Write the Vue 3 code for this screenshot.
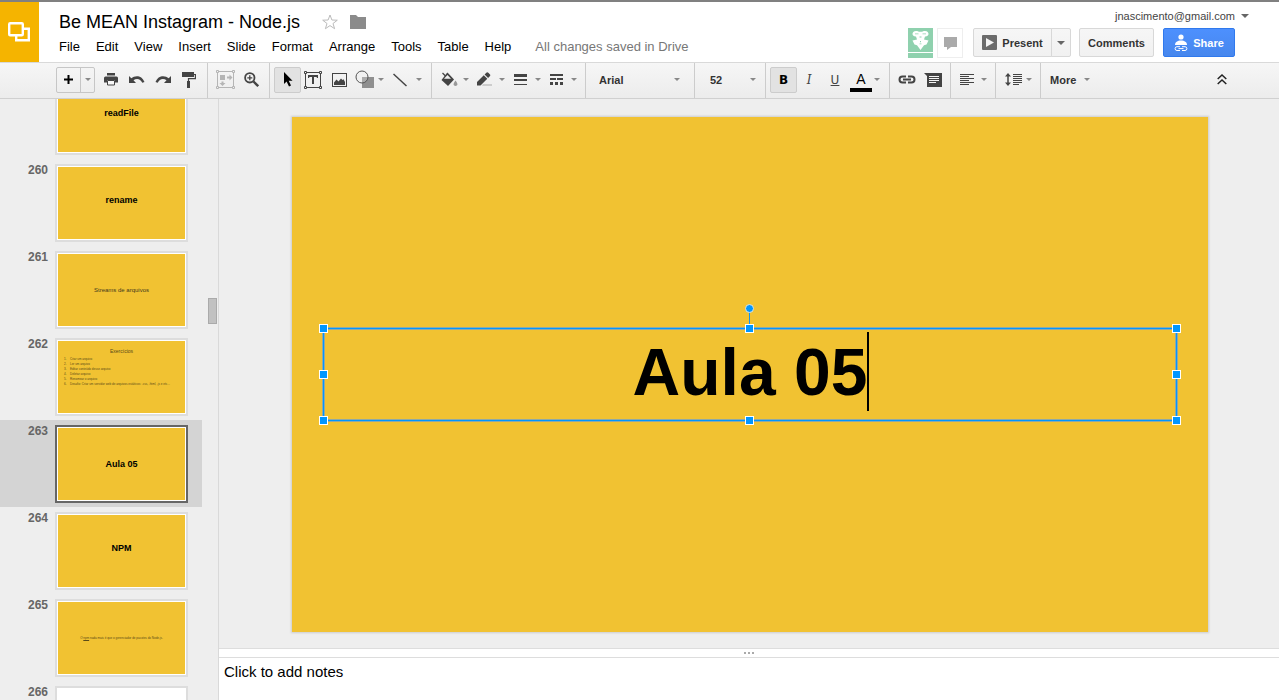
<script setup>
import { ref } from 'vue'

const menus = ['File', 'Edit', 'View', 'Insert', 'Slide', 'Format', 'Arrange', 'Tools', 'Table', 'Help']

const slides = [
  { n: 259, kind: 'title', text: 'readFile', raised: true, scrolledOff: true },
  { n: 260, kind: 'title', text: 'rename', raised: true },
  { n: 261, kind: 'plain', text: 'Streams de arquivos' },
  {
    n: 262,
    kind: 'list',
    text: 'Exercícios',
    items: [
      'Criar um arquivo',
      'Ler um arquivo',
      'Editar conteúdo desse arquivo',
      'Deletar arquivo',
      'Renomear o arquivo',
      'Desafio: Criar um servidor web de arquivos estáticos: .css, .html, .js e etc...'
    ]
  },
  { n: 263, kind: 'title', text: 'Aula 05' },
  { n: 264, kind: 'title', text: 'NPM', raised: true },
  { n: 265, kind: 'tiny', text: 'nada mais é que o gerenciador de pacotes do Node.js.' },
  { n: 266, kind: 'blank', text: '' }
]
const current = ref(263)
const font = ref('Arial')
const size = ref('52')
const notes = ref('')
const handles = ['nw', 'n', 'ne', 'w', 'e', 'sw', 's', 'se']
</script>

<template>
  <div class="app">
    <header class="header">
      <a class="logo" href="#" aria-label="Slides home">
        <svg width="24" height="22" viewBox="0 0 24 22" fill="none" stroke="#fff" stroke-width="2.4">
          <rect x="2.2" y="2.2" width="13.6" height="12" rx="1" />
          <path d="M17 7.800h4.800v11.400H9.200v-4.500" />
        </svg>
      </a>
      <div class="doc">
        <div class="title-row">
          <h1>Be MEAN Instagram - Node.js</h1>
          <button class="bare star" aria-label="Star">
            <svg width="16" height="16" viewBox="0 0 16 16" fill="none" stroke="#bbb">
              <path d="M8 1l1.900 5 5.400.2-4.300 3.300 1.600 5.200L8 11.600l-4.600 3.100L5 9.500.7 6.200 6.100 6z" />
            </svg>
          </button>
          <button class="bare" aria-label="Move to folder">
            <svg width="16" height="14" viewBox="0 0 16 14" fill="#8b8b8b"><path d="M0 0h6l2 2h8v12H0z" /></svg>
          </button>
        </div>
        <nav class="menus">
          <button v-for="m in menus" :key="m" class="bare">{{ m }}</button>
          <span class="saved">All changes saved in Drive</span>
        </nav>
      </div>
      <div class="account">
        <button class="bare email">jnascimento@gmail.com<i class="arrow big"></i></button>
        <div class="actions">
          <div class="avatar">
            <svg width="25" height="30" viewBox="0 0 25 30">
              <rect width="25" height="30" fill="#8fd1ae" />
              <path fill="#fff" d="M8 3c2 0 2.500.8 4.500.8S15 3 17 3c2.500 0 3.500 1.500 3.500 3S19 8.500 17.500 8.500h-10C6 8.500 4.500 7.500 4.500 6S5.500 3 8 3zM8 8.500h9l-1 3 4.500 1-2 4-2.500.8-3.500 4.700L9 17.300l-2.500-.8-2-4 4.500-1z" />
              <path fill="#8fd1ae" d="M7 5.500h3.500v.8H7zM14.500 5.500H18v.8h-3.500zM11.500 8.500h2v1h-2zM12 13h1v1.200h-1zM11.500 15.500h2v.8h-2z" />
              <path fill="#fff" d="M0 24h25v1H0z" />
            </svg>
          </div>
          <button class="chat" aria-label="Chat">
            <svg width="13" height="13" viewBox="0 0 13 13" fill="#aaa"><path d="M0 0h13v10H7l-4 3v-3H0z" /></svg>
          </button>
          <div class="split present">
            <button class="push main">
              <svg width="15" height="15" viewBox="0 0 15 15"><rect width="15" height="15" rx="1" fill="#6b6b6b" /><path fill="#f4f4f4" d="M4 3l8 4.500L4 12z" /></svg>
              Present
            </button>
            <button class="push drop" aria-label="Present options"><i class="arrow big"></i></button>
          </div>
          <button class="push comments">Comments</button>
          <button class="push share">
            <svg width="14" height="18" viewBox="0 0 14 18" fill="#fff">
              <circle cx="7" cy="3" r="2.600" />
              <path d="M1 11c0-3 2.500-4.500 6-4.500s6 1.500 6 4.500z" />
              <g fill="none" stroke="#fff"><path d="M6 12.700H3a1.800 1.800 0 000 3.800h3M8 12.700h3a1.800 1.800 0 010 3.800H8M4.500 14.600h5" /></g>
            </svg>
            Share
          </button>
        </div>
      </div>
    </header>

    <div class="toolbar" role="toolbar" aria-label="Editing tools">
      <div class="group first">
        <div class="split new">
          <button class="tool" aria-label="New slide">
            <svg width="9" height="9" viewBox="0 0 9 9"><path fill="#000" d="M3.500 0h2v3.500H9v2H5.500V9h-2V5.500H0v-2h3.500z" /></svg>
          </button>
          <button class="tool" aria-label="New slide layout"><i class="arrow"></i></button>
        </div>
        <button class="tool" aria-label="Print">
          <svg width="14" height="13" viewBox="0 0 14 13" fill="#444"><path d="M3 0h8v2.500H3zM1.500 3.500h11Q14 3.500 14 5v4.500h-3V7H3v2.500H0V5q0-1.500 1.500-1.500z" /><path d="M3.500 7.500h7v4.500h-7z" fill="#f8f8f8" stroke="#444" /></svg>
        </button>
        <button class="tool" aria-label="Undo">
          <svg width="16" height="10" viewBox="0 0 16 10" fill="#444"><path d="M0 1l2.300 2.200C6 0 13 0 15.500 7l-2.200.8C11.500 3.500 7.500 3 4.500 5.200L7 8H0z" /></svg>
        </button>
        <button class="tool" aria-label="Redo">
          <svg width="16" height="10" viewBox="0 0 16 10" fill="#444"><path d="M16 1l-2.300 2.200C10 0 3 0 .5 7l2.200.8C4.500 3.500 8.500 3 11.500 5.200L9 8h7z" /></svg>
        </button>
        <button class="tool" aria-label="Paint format">
          <svg width="14" height="16" viewBox="0 0 14 16"><path fill="#444" d="M0 0h12v5H0zM5 9h3v7H5z" /><path d="M12 2.500h1.400v4.200H6.500V10" fill="none" stroke="#444" stroke-width="1.200" /></svg>
        </button>
      </div>

      <div class="group zoom">
        <button class="tool" disabled aria-label="Zoom to fit">
          <svg width="19" height="19" viewBox="0 0 19 19" fill="none" stroke="#b5b5b5">
            <path d="M3 1.500h13M3 17.500h13M1.500 3v13M17.500 3v13" />
            <path d="M.5.5h2v2h-2zM16.500.5h2v2h-2zM.5 16.500h2v2h-2zM16.500 16.500h2v2h-2z" />
            <path fill="#b5b5b5" stroke="none" d="M4 5h5v5H4zM11 6.500h2.500v-2l3 3-3 3v-2H11zM5.500 11.500h2v1.500h2l-3 3-3-3h2z" />
          </svg>
        </button>
        <button class="tool" aria-label="Zoom">
          <svg width="15" height="15" viewBox="0 0 15 15" fill="none" stroke="#444"><circle cx="5.800" cy="5.800" r="4.700" stroke-width="1.800" /><path d="M9.500 9.500l4.700 4.700" stroke-width="2.400" /><path d="M3.300 5.800h5M5.800 3.300v5" stroke-width="1.300" /></svg>
        </button>
      </div>

      <div class="group insert">
        <button class="tool on" aria-label="Select">
          <svg width="10" height="15" viewBox="0 0 10 15" fill="#000"><path d="M1 0v12l2.600-2.500L6 14.500l2-1-2.300-4.800H9.500z" /></svg>
        </button>
        <button class="tool" aria-label="Text box">
          <svg width="18" height="18" viewBox="0 0 18 18" fill="none" stroke="#444">
            <path d="M3 1.500h12M3 16.500h12M1.500 3v12M16.500 3v12" /><path d="M.5.5h2v2h-2zM15.500.5h2v2h-2zM.5 15.500h2v2h-2zM15.500 15.500h2v2h-2z" />
            <path fill="#444" stroke="none" d="M4 4h10v3h-1.200V6H10v7H8V6H5.200v1H4z" />
          </svg>
        </button>
        <button class="tool" aria-label="Image">
          <svg width="15" height="14" viewBox="0 0 15 14"><rect x=".5" y=".5" width="14" height="13" fill="none" stroke="#444" /><path fill="#444" d="M2 12V9.500L4.500 6.500l2 2L9 5.500l1.500 1.500 1-.8L13 9v3z" /></svg>
        </button>
        <button class="tool menu shape" aria-label="Shape">
          <svg width="20" height="19" viewBox="0 0 20 19"><path fill="#8f8f8f" d="M7 7h12v11H7z" /><circle cx="7" cy="7" r="6" fill="#eee" fill-opacity=".3" stroke="#555" /></svg>
          <i class="arrow"></i>
        </button>
        <button class="tool menu line" aria-label="Line">
          <svg width="14" height="14" viewBox="0 0 14 14"><path d="M.5 1l13 12" stroke="#444" stroke-width="1.500" /></svg>
          <i class="arrow"></i>
        </button>
      </div>

      <div class="group style">
        <button class="tool menu" aria-label="Fill color">
          <svg width="17" height="16" viewBox="0 0 17 16"><path d="M1.500 1l4 4" stroke="#444" stroke-width="1.300" /><path fill="#444" d="M5.500 1.500l1-1 6.500 7-6 6.500L.5 8z" /><path d="M6.500 3l3.500 3.800H3z" fill="#f1f1f1" /><path fill="#999" d="M14.500 8.500q2.500 3 1.800 4.500-1.800 2-3.600 0-.7-1.500 1.800-4.500z" /></svg>
          <i class="arrow"></i>
        </button>
        <button class="tool menu" aria-label="Line color">
          <svg width="16" height="15" viewBox="0 0 16 15" fill="#444"><path d="M0 13.500V10l6.800-6.800 3.500 3.500-6.800 6.800zM7.600 2.400L9.300.7q1-1 2 0l1.500 1.500q1 1 0 2l-1.700 1.700z" /><path fill="#aaa" d="M6 12.500h9v1H5z" /></svg>
          <i class="arrow"></i>
        </button>
        <button class="tool menu" aria-label="Line weight">
          <svg width="14" height="12" viewBox="0 0 14 12" fill="#444"><path d="M1 0h13v3H1zM1 5h13v2H1zM1 10h13v1H1z" /></svg>
          <i class="arrow"></i>
        </button>
        <button class="tool menu" aria-label="Line dash">
          <svg width="14" height="12" viewBox="0 0 14 12" fill="#444"><path d="M1 0h13v2H1zM1 4h6v2H1zM8 4h6v2H8zM1 8h3v3H1zM6 8h3v3H6zM11 8h3v3h-3z" /></svg>
          <i class="arrow"></i>
        </button>
      </div>

      <div class="group pick family">
        <select v-model="font" aria-label="Font"><option>Arial</option><option>Georgia</option></select>
        <i class="arrow"></i>
      </div>
      <div class="group pick points">
        <select v-model="size" aria-label="Font size"><option>52</option><option>60</option></select>
        <i class="arrow"></i>
      </div>

      <div class="group text">
        <button class="tool on" aria-label="Bold"><b class="letter">B</b></button>
        <button class="tool" aria-label="Italic"><em class="letter">I</em></button>
        <button class="tool" aria-label="Underline"><u class="letter">U</u></button>
        <button class="tool menu color" aria-label="Text color"><span>A</span><i class="arrow"></i></button>
      </div>

      <div class="group links">
        <button class="tool" aria-label="Insert link">
          <svg width="18" height="9" viewBox="0 0 18 9" fill="none" stroke="#444" stroke-width="2"><path d="M8 1.500H4.500a3 3 0 000 6H8M10 1.500h3.500a3 3 0 010 6H10M5 4.500h8" /></svg>
        </button>
        <button class="tool" aria-label="Insert comment">
          <svg width="18" height="14" viewBox="0 0 18 14"><path fill="#444" d="M0 0h18v14H3V3z" /><path stroke="#f4f4f4" d="M5 3.500h10M5 5.500h10M5 7.500h10M5 9.500h7" /></svg>
        </button>
      </div>

      <div class="group para">
        <button class="tool menu" aria-label="Align">
          <svg width="14" height="12" viewBox="0 0 14 12" stroke="#444"><path d="M0 .5h14M0 2.500h9M0 4.500h14M0 6.500h9M0 8.500h14M0 10.500h9" /></svg>
          <i class="arrow"></i>
        </button>
      </div>
      <div class="group para">
        <button class="tool menu" aria-label="Line spacing">
          <svg width="17" height="13" viewBox="0 0 17 13"><path stroke="#444" d="M8 1.500h9M8 3.500h9M8 5.500h9M8 7.500h9M8 9.500h9M8 11.500h6" /><path stroke="#444" stroke-width="1.500" d="M3 2v9" /><path fill="#444" d="M3 0l3 3.500H0zM3 13l3-3.500H0z" /></svg>
          <i class="arrow"></i>
        </button>
      </div>
      <button class="tool more">More<i class="arrow"></i></button>
      <button class="tool hide" aria-label="Hide menus">
        <svg width="10" height="11" viewBox="0 0 10 11" fill="none" stroke="#222" stroke-width="1.500"><path d="M.7 5L5 1l4.300 4M.7 10L5 6l4.300 4" /></svg>
      </button>
    </div>

    <main class="work">
      <aside class="film">
        <ol>
          <li v-for="s in slides" :key="s.n" :class="{ current: s.n === current }">
            <span class="num"><template v-if="!s.scrolledOff">{{ s.n }}</template></span>
            <button class="thumb" :class="s.kind" :aria-label="'Slide ' + s.n" @click="current = s.n">
              <span class="face" :class="{ raised: s.raised }">
                <span v-if="s.kind === 'tiny'">O <u>npm</u> {{ s.text }}</span>
                <span v-else>{{ s.text }}</span>
                <span v-if="s.items" class="items">
                  <span v-for="(t, i) in s.items" :key="t" class="item"><span>{{ i + 1 }}.</span><span>{{ t }}</span></span>
                </span>
              </span>
            </button>
          </li>
        </ol>
        <div class="scroll-thumb"></div>
      </aside>

      <section class="editor">
        <div class="stage">
          <div class="slide">
            <div class="box">
              <span class="slide-title">Aula 05</span><span class="caret"></span>
              <i class="stem"></i>
              <i class="rotor"></i>
              <i v-for="h in handles" :key="h" class="handle" :class="h"></i>
            </div>
          </div>
        </div>
        <div class="grip"><i></i><i></i><i></i></div>
        <textarea v-model="notes" class="notes" aria-label="Speaker notes" placeholder="Click to add notes"></textarea>
      </section>
    </main>
  </div>
</template>

<style>
body {
  margin: 0;
  overflow: hidden;
}
</style>

<style scoped>
* {
  box-sizing: border-box;
}
.app {
  display: flex;
  flex-direction: column;
  height: 100vh;
  overflow: hidden;
  background: #eee;
  color: #000;
  font-family: "Liberation Sans", Arial, sans-serif;
  font-size: 13px;
}
button,
select,
textarea {
  font: inherit;
  color: inherit;
  margin: 0;
  padding: 0;
  border: 0;
  background: none;
  border-radius: 0;
}
svg {
  display: block;
  flex: none;
}
.arrow {
  flex: none;
  border: 3px solid transparent;
  border-top-color: #888;
  border-bottom-width: 0;
}
.arrow.big {
  border-width: 4px 4px 0;
  border-top-color: #666;
}

/* header */
.header {
  display: flex;
  flex: none;
  height: 62px;
  background: #fff;
  border-top: 2px solid #808080;
}
.logo {
  display: flex;
  align-items: center;
  width: 39px;
  padding-left: 7px;
  background: #f5b400;
}
.doc {
  flex: 1;
  padding: 8px 0 0 20px;
  white-space: nowrap;
}
.title-row {
  display: flex;
  align-items: center;
  height: 24px;
}
h1 {
  margin: 0;
  font-size: 18px;
  font-weight: 400;
}
.star {
  margin: 0 12px 0 22px;
}
.menus {
  display: flex;
  gap: 16px;
  padding-top: 4px;
  line-height: 18px;
}
.saved {
  margin-left: 8px;
  color: #777;
}
.account {
  display: flex;
  flex-direction: column;
  align-items: flex-end;
  padding: 6px 44px 0 0;
}
.email {
  display: flex;
  align-items: center;
  gap: 6px;
  height: 16px;
  margin-right: -14px;
  color: #444;
  font-size: 11px;
}
.actions {
  display: flex;
  align-items: flex-start;
  padding-top: 4px;
}
.avatar {
  width: 25px;
}
.chat {
  display: flex;
  align-items: center;
  justify-content: center;
  width: 26px;
  height: 30px;
  margin: 0 10px 0 4px;
  border: 1px solid #eee;
}
.split {
  display: flex;
}
.push {
  display: flex;
  align-items: center;
  justify-content: center;
  height: 29px;
  border: 1px solid #d8d8d8;
  border-radius: 2px;
  background: linear-gradient(#f6f6f6, #f1f1f1);
  color: #333;
  font-size: 11px;
  font-weight: 700;
}
.main {
  gap: 5px;
  width: 79px;
  border-radius: 2px 0 0 2px;
}
.drop {
  width: 20px;
  margin-left: -1px;
  border-radius: 0 2px 2px 0;
}
.comments {
  width: 75px;
  margin: 0 9px 0 8px;
}
.share {
  gap: 5px;
  width: 72px;
  border-color: #3079ed;
  background: linear-gradient(#4d90fe, #4787ed);
  color: #fff;
}

/* toolbar */
.toolbar {
  display: flex;
  flex: none;
  height: 37px;
  border-top: 1px solid #d9d9d9;
  border-bottom: 1px solid #d0d0d0;
  background: linear-gradient(#f6f6f6, #ececec);
}
.group {
  display: flex;
  align-items: center;
  flex: none;
  padding-bottom: 2px;
  border-right: 1px solid #ccc;
}
.tool {
  display: flex;
  align-items: center;
  justify-content: center;
  flex: none;
  width: 26px;
  height: 26px;
}
.tool.on {
  width: 27px;
  margin-right: -1px;
  border: 1px solid #ccc;
  border-radius: 2px;
  background: #e2e2e2;
}
.menu {
  width: 36px;
  justify-content: space-between;
  padding: 0 4px 0 4px;
}
.first {
  width: 208px;
  padding-left: 56px;
}
.new {
  height: 26px;
  margin-right: 3px;
  border: 1px solid #c6c6c6;
  border-radius: 2px;
}
.new .tool {
  width: 23px;
  height: 24px;
}
.new .tool + .tool {
  width: 14px;
  border-left: 1px solid #c6c6c6;
}
.zoom {
  width: 62px;
  padding-left: 4px;
}
.insert {
  width: 162px;
  padding-left: 4px;
}
.shape {
  padding-left: 3px;
}
.line {
  width: 38px;
  padding-left: 5px;
}
.style {
  width: 154px;
  padding-left: 5px;
}
.pick {
  justify-content: space-between;
  color: #333;
  font-size: 11px;
  font-weight: 700;
}
.pick select {
  flex: 1;
  height: 26px;
  appearance: none;
}
.family {
  width: 109px;
  padding-left: 13px;
  padding-right: 14px;
}
.points {
  width: 71px;
  padding-left: 15px;
  padding-right: 9px;
}
.text {
  width: 124px;
  padding-left: 4px;
}
.letter {
  color: #444;
  font-family: "DejaVu Serif", serif;
  font-size: 12px;
  font-weight: 400;
}
.on .letter {
  color: #000;
  font-family: "DejaVu Sans", sans-serif;
  font-weight: 700;
}
u.letter {
  font-family: "DejaVu Sans", sans-serif;
}
.color {
  padding: 0 6px 0 2px;
  width: 38px;
}
.color span {
  width: 22px;
  border-bottom: 4px solid #000;
  color: #000;
  font-size: 14px;
  line-height: 18px;
  margin-top: 3px;
}
.links {
  width: 61px;
  padding-left: 4px;
}
.para {
  width: 45px;
  padding-left: 4px;
}
.para .menu {
  padding-left: 5px;
}
.more {
  gap: 8px;
  width: auto;
  height: 33px;
  margin-right: auto;
  padding-left: 9px;
  color: #333;
  font-size: 11px;
  font-weight: 700;
}
.hide {
  height: 33px;
  margin-right: 44px;
}

/* filmstrip */
.work {
  display: flex;
  flex: 1;
  min-height: 0;
}
.film {
  position: relative;
  flex: none;
  width: 219px;
  overflow: hidden;
  border-right: 1px solid #d9d9d9;
}
ol {
  margin: -27px 0 0;
  padding: 0;
  list-style: none;
}
li {
  display: flex;
  gap: 7px;
  width: 202px;
  height: 87px;
  padding-top: 5px;
}
li.current {
  background: #d4d4d4;
}
.num {
  width: 48px;
  color: #666;
  font-size: 12px;
  font-weight: 700;
  line-height: 12px;
  text-align: right;
}
.thumb {
  width: 133px;
  height: 78px;
  padding: 1px;
  border: 2px solid #ddd;
  background: #fff;
}
.current .thumb {
  border-color: #666;
}
.face {
  display: flex;
  flex-direction: column;
  align-items: center;
  justify-content: center;
  height: 100%;
  overflow: hidden;
  background: #f1c232;
  white-space: nowrap;
}
.face.raised {
  padding-bottom: 6px;
}
.title {
  font-size: 9px;
  font-weight: 700;
}
.plain {
  color: #443a1c;
  font-size: 6px;
}
.tiny {
  color: #5a4a18;
  font-size: 3px;
}
.blank .face {
  background: #fff;
}
.list {
  color: #5a4a18;
  font-size: 5px;
}
.list .face {
  justify-content: flex-start;
  padding-top: 7px;
}
.items {
  align-self: stretch;
  padding: 3px 0 0 6px;
  font-size: 3px;
  text-align: left;
}
.item {
  display: flex;
  gap: 3px;
  height: 5px;
  line-height: 5px;
}
.item span:first-child {
  width: 3px;
}
.scroll-thumb {
  position: absolute;
  right: 1px;
  top: 199px;
  width: 9px;
  height: 26px;
  border: 1px solid #aaa;
  background: #c1c1c1;
}

/* editor */
.editor {
  display: flex;
  flex: 1;
  flex-direction: column;
  min-width: 0;
}
.stage {
  flex: 1;
  min-height: 0;
  padding: 18px 71px 0 73px;
}
.slide {
  display: flex;
  align-items: center;
  aspect-ratio: 16 / 9;
  padding: 0 31px;
  background: #f1c232;
  box-shadow: 0 0 2px 1px #ccc;
}
.box {
  position: relative;
  display: flex;
  align-items: center;
  justify-content: center;
  flex: 1;
  height: 93px;
  padding-bottom: 6px;
  border: 1px solid #0096ff;
  box-shadow: 0 0 0 1px #8fa9a5, inset 0 0 0 1px #8fa9a5;
}
.slide-title {
  font-size: 66px;
  font-weight: 700;
  line-height: 76px;
}
.caret {
  width: 2px;
  height: 79px;
  margin-right: -2px;
  background: #000;
}
.handle {
  position: absolute;
  width: 9px;
  height: 9px;
  margin: -5px;
  border: 1px solid #fff;
  background: #0096ff;
}
.nw, .n, .ne {
  top: 0;
}
.w, .e {
  top: 50%;
}
.sw, .s, .se {
  top: 100%;
  margin-top: -4px;
}
.nw, .w, .sw {
  left: 0;
}
.n, .s {
  left: 50%;
}
.ne, .e, .se {
  left: 100%;
  margin-left: -4px;
}
.stem {
  position: absolute;
  left: 50%;
  top: -18px;
  width: 1px;
  height: 14px;
  margin-left: -1px;
  background: #1193f0;
}
.rotor {
  position: absolute;
  left: 50%;
  top: -25px;
  width: 9px;
  height: 9px;
  margin-left: -5px;
  border: 1px solid #e4e6dc;
  border-radius: 50%;
  background: #0096ff;
}
.grip {
  display: flex;
  align-items: center;
  justify-content: center;
  flex: none;
  gap: 2px;
  height: 10px;
  border: solid #ddd;
  border-width: 1px 0;
  background: #fff;
}
.grip i {
  width: 2px;
  height: 2px;
  background: #aaa;
}
.notes {
  flex: none;
  height: 42px;
  padding: 5px;
  background: #fff;
  font-size: 15px;
  line-height: 18px;
  resize: none;
  outline: 0;
}
.notes::placeholder {
  color: #000;
  opacity: 1;
}
</style>
